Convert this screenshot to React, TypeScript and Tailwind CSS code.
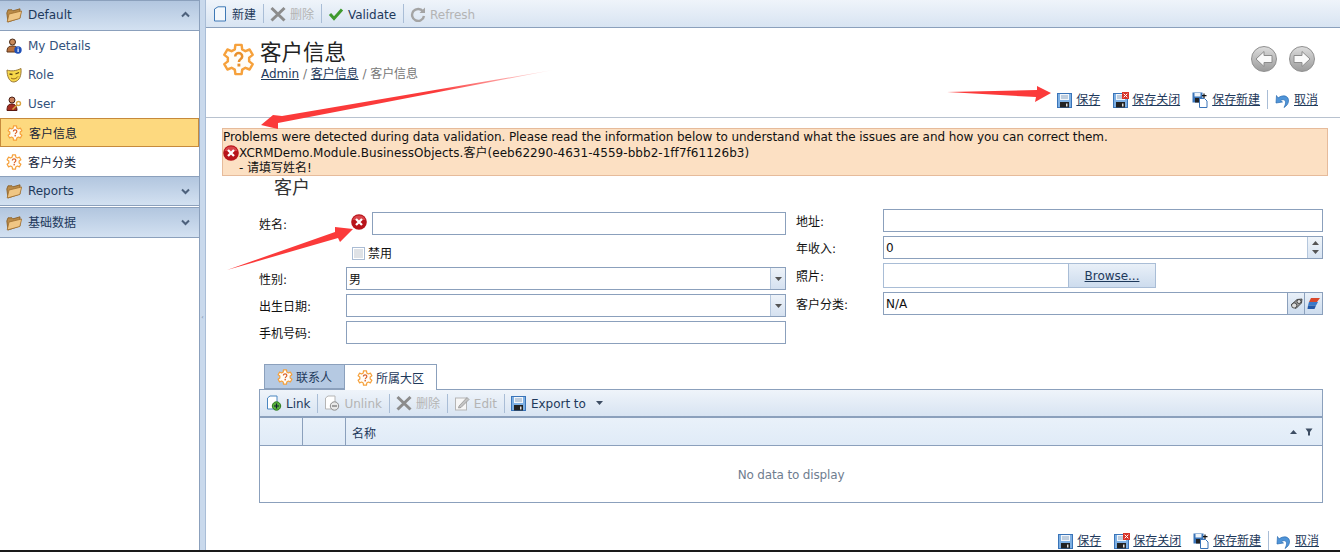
import React from "react";

const font = { fontFamily: '"DejaVu Sans", "Noto Sans CJK SC", sans-serif', letterSpacing: "-0.03px" };

// six toothed gear outline, 32 unit box
const gearPath = (() => {
  const at = (r: number, deg: number) => {
    const a = ((deg - 90) * Math.PI) / 180;
    return `${(16 + r * Math.cos(a)).toFixed(2)} ${(16 + r * Math.sin(a)).toFixed(2)}`;
  };
  const parts: string[] = [];
  for (let i = 0; i < 6; i++) {
    const c = i * 60;
    parts.push(at(10.5, c - 20), at(14.5, c - 12), at(14.5, c + 12), at(10.5, c + 20));
  }
  return `M${parts.join(" L")} Z`;
})();

const Gear = ({ size = 16, q = "#d9622b" }: { size?: number; q?: string }) => (
  <svg width={size} height={size} viewBox="0 0 32 32" className="shrink-0">
    <path d={gearPath} fill="#fffdf8" stroke="#f6a13c" strokeWidth="2.400" strokeLinejoin="round" />
    <path d="M12.800 13 c0 -4.400 6.800 -4.400 6.800 0 c0 2.700 -3.200 2.700 -3.200 5.500" fill="none" stroke={q} strokeWidth="2.400" />
    <rect x="15" y="20" width="2.800" height="2.800" fill={q} />
  </svg>
);

const Folder = () => (
  <svg width="16" height="16" viewBox="0 0 16 16" className="shrink-0">
    <path d="M0.800 6 L2 2.800 H6 L7 3.800 L14 1.800 V11 L2 15 Z" fill="#b98a48" stroke="#85591f" strokeWidth="0.800" />
    <path d="M1.200 15 L3 7 L15.700 4 L13.800 11.500 Z" fill="#f0c684" stroke="#a06f2e" strokeWidth="0.800" />
  </svg>
);

const Chevron = ({ up }: { up?: boolean }) => (
  <svg width="9" height="7" viewBox="0 0 9 7" className="shrink-0">
    <path d={up ? "M1 5.500 L4.500 2 L8 5.500" : "M1 1.500 L4.500 5 L8 1.500"} fill="none" stroke="#4d617c" strokeWidth="2" />
  </svg>
);

const UserInfoIcon = () => (
  <svg width="16" height="16" viewBox="0 0 16 16" className="shrink-0">
    <circle cx="6.500" cy="4" r="3" fill="#c98a5a" stroke="#4a2c18" />
    <path d="M1 14 C1 9 3 8 6.500 8 C10 8 12 9 12 14 Z" fill="#b8713e" stroke="#5a3418" />
    <circle cx="12" cy="12" r="3.700" fill="#1f50b8" />
    <rect x="11.500" y="11" width="1.200" height="3" fill="#fff" />
    <rect x="11.500" y="9.500" width="1.200" height="1" fill="#fff" />
  </svg>
);

const MaskIcon = () => (
  <svg width="16" height="16" viewBox="0 0 16 16" className="shrink-0">
    <path d="M1 3 C5 4.500 10 4 15 1.500 C15.500 8 14 14 8 15 C3 15 1 9 1 3 Z" fill="#f7d84a" stroke="#9c7a3a" />
    <path d="M3.500 7 L6.500 7.500 M9.500 7 L13 5.500" stroke="#5c4314" strokeWidth="1.300" />
    <path d="M5 11 C7 12.500 10 12 12 9.500" fill="none" stroke="#8a5a14" />
  </svg>
);

const UserKeyIcon = () => (
  <svg width="16" height="16" viewBox="0 0 16 16" className="shrink-0">
    <circle cx="6" cy="4" r="3" fill="#c9805a" stroke="#4a2018" />
    <path d="M1 14.500 C1 9 3 8 6 8 C9 8 11 10 11 14.500 Z" fill="#a52c20" stroke="#5a1810" />
    <circle cx="12.500" cy="7.500" r="2" fill="none" stroke="#d9a441" strokeWidth="1.400" />
    <path d="M11 9 L6.500 13.500" stroke="#d9a441" strokeWidth="1.500" />
  </svg>
);

const ErrorIcon = ({ size = 16 }: { size?: number }) => (
  <svg width={size} height={size} viewBox="0 0 16 16" className="shrink-0">
    <circle cx="8" cy="8" r="7.800" fill="#b8141a" />
    <path d="M1.500 6 A7 7 0 0 1 14.500 6 Z" fill="#d9444a" />
    <path d="M5 5 L11 11 M11 5 L5 11" stroke="#fff" strokeWidth="2.300" />
  </svg>
);

const Disk = ({ extra }: { extra?: "close" }) => (
  <svg width="16" height="16" viewBox="0 0 16 16" className="shrink-0">
    <rect x="0.500" y="1.500" width="14" height="14" fill="#7db0e4" stroke="#3a74b8" />
    <rect x="3" y="2" width="9" height="6" fill="#f2f6fb" />
    <path d="M4 4 H11 M4 6 H11" stroke="#8aa4c0" />
    <rect x="3" y="10" width="9" height="5.500" fill="#222" />
    <rect x="9" y="11.500" width="1.500" height="3" fill="#ddd" />
    {extra === "close" && (
      <>
        <rect x="9" y="0" width="7" height="7" fill="#d8352a" />
        <path d="M10.700 1.700 L14.300 5.300 M14.300 1.700 L10.700 5.300" stroke="#fff" />
      </>
    )}
  </svg>
);

const DiskNew = () => (
  <svg width="16" height="16" viewBox="0 0 16 16" className="shrink-0">
    <rect x="0.500" y="0.500" width="10" height="10" fill="#3a74b8" />
    <rect x="3" y="6" width="5" height="4.500" fill="#222" />
    <rect x="2.500" y="1" width="6" height="3.500" fill="#eef4fa" />
    <path d="M7.500 6.500 H12.500 L15 9 V15.500 H7.500 Z" fill="#fff" stroke="#3a74b8" />
    <path d="M12 1.500 V6 M10 3.700 H14.500" stroke="#111" strokeWidth="1.200" />
  </svg>
);

const Undo = () => (
  <svg width="16" height="16" viewBox="0 0 16 16" className="shrink-0">
    <path d="M3 6 C8 2 14 4 13.500 9 C13.300 12 11.500 14 9 15.500 C11 12 11 9 9.500 8 C8 7.300 6.500 7.800 5.500 8.800 L7.500 10 L1 11 L1.500 3.500 Z" fill="#4f94d8" stroke="#2b6cb0" strokeWidth="0.700" />
  </svg>
);

const NavCircle = ({ dir }: { dir: "left" | "right" }) => (
  <div className="flex h-[26px] w-[26px] items-center justify-center rounded-full border border-[#8f8f8f] bg-gradient-to-b from-[#dcdcdc] to-[#9c9c9c]">
    <svg width="20" height="18" viewBox="0 0 20 18">
      <path
        d={dir === "left" ? "M10 1.500 L2 9 L10 16.500 V12.500 H18 V5.500 H10 Z" : "M10 1.500 L18 9 L10 16.500 V12.500 H2 V5.500 H10 Z"}
        fill="#fafafa"
        stroke="#8c8c8c"
      />
    </svg>
  </div>
);

const Sep = () => <div className="ml-[7px] mr-[6px] h-[19px] w-px shrink-0 bg-[#a9bdd6]" />;

const NewDoc = () => (
  <svg width="16" height="16" viewBox="0 0 16 16" className="shrink-0">
    <path d="M2.500 3 L6 0.800 H13.500 V15 H2.500 Z" fill="#f4f8fc" stroke="#3f79b6" />
  </svg>
);

const XIcon = () => (
  <svg width="16" height="16" viewBox="0 0 16 16" className="shrink-0">
    <path d="M1.500 2 L14.500 14.500 M14.500 2 L1.500 14.500" stroke="#8c8c8c" strokeWidth="3" />
  </svg>
);

const CheckIcon = () => (
  <svg width="16" height="16" viewBox="0 0 16 16" className="shrink-0">
    <path d="M2 8 L6 12.500 L14 3.500" fill="none" stroke="#3f9a2e" strokeWidth="3" />
  </svg>
);

const RefreshIcon = () => (
  <svg width="16" height="16" viewBox="0 0 16 16" className="shrink-0">
    <path d="M13 5.500 A6 6 0 1 0 14 10" fill="none" stroke="#a4a4a4" strokeWidth="2.400" />
    <path d="M15 1.500 V7 H9.500 Z" fill="#a4a4a4" />
  </svg>
);

const LinkIcon = ({ minus }: { minus?: boolean }) => (
  <svg width="16" height="16" viewBox="0 0 16 16" className="shrink-0">
    <path d="M1.500 3 L4 1 H11 V14 H1.500 Z" fill="#fff" stroke={minus ? "#b5b5b5" : "#4a86c0"} />
    <circle cx="10.500" cy="11" r="4.200" fill={minus ? "#e8e8e8" : "#58b03c"} stroke={minus ? "#8c8c8c" : "#2c7a1e"} />
    {minus ? (
      <path d="M8 11 H13" stroke="#777" strokeWidth="1.300" />
    ) : (
      <path d="M8 11 H13 M10.500 8.500 V13.500" stroke="#123" strokeWidth="1.200" />
    )}
  </svg>
);

const EditIcon = () => (
  <svg width="16" height="16" viewBox="0 0 16 16" className="shrink-0">
    <rect x="1.500" y="3" width="11" height="12" fill="#f6f6f6" stroke="#b5b5b5" />
    <path d="M5 11 L13 2.500 L15 4.500 L7 12.500 L4.500 13 Z" fill="#c4c4c4" stroke="#8c8c8c" strokeWidth="0.700" />
  </svg>
);

const Caret = ({ up, color = "#3d4d63" }: { up?: boolean; color?: string }) => (
  <svg width="7" height="4" viewBox="0 0 7 4" className="shrink-0">
    <path d={up ? "M0 4 L3.500 0 L7 4 Z" : "M0 0 L7 0 L3.500 4 Z"} fill={color} />
  </svg>
);

const Group = ({ label, up, className = "h-[30px]" }: { label: string; up?: boolean; className?: string }) => (
  <div className={`flex items-center border-y border-[#8ba0bc] bg-gradient-to-b from-[#b2c6df] to-[#d3e1f1] pl-[6px] pr-[9px] ${className}`}>
    <Folder />
    <span className="ml-[6px] flex-1 text-[12px] text-[#1e395b]">{label}</span>
    <Chevron up={up} />
  </div>
);

const NavItem = ({ icon, label, active, cjk }: { icon: React.ReactNode; label: string; active?: boolean; cjk?: boolean }) => (
  <div
    className={`flex h-[29px] items-center pl-[6px] text-[12px] ${
      active ? "border border-[#c68a3c] bg-[#fdd97f] pl-[5px] text-[#16243a]" : cjk ? "text-[#16243a]" : "text-[#33527c]"
    }`}
  >
    {icon}
    <span className={`ml-[6px] ${cjk ? "pt-[2px]" : ""}`}>{label}</span>
  </div>
);

const Label = ({ children }: { children: React.ReactNode }) => (
  <div className="w-[87px] shrink-0 pt-[2px] text-[12px] text-[#111]">{children}</div>
);

const Field = ({ label, children, h = "h-[23px]", mb = "mb-[4px]" }: { label: string; children: React.ReactNode; h?: string; mb?: string }) => (
  <div className={`flex ${h} ${mb} items-center`}>
    <Label>{label}</Label>
    {children}
  </div>
);

const Box = ({ value, className = "" }: { value?: string; className?: string }) => (
  <div className={`flex h-full min-w-0 flex-1 items-center border border-[#8ba0bc] bg-white px-[2px] text-[12px] text-[#111] ${className}`}>{value}</div>
);

const Combo = ({ value }: { value?: string }) => (
  <div className="flex h-full flex-1 border border-[#8ba0bc] bg-white">
    <div className="flex flex-1 items-center px-[2px] pt-[2px] text-[12px] text-[#111]">{value}</div>
    <div className="flex w-[15px] items-center justify-center border-l border-[#b5c7dd] bg-gradient-to-b from-[#eef3f9] to-[#d5e1f0]">
      <Caret color="#555" />
    </div>
  </div>
);

const ToolText = ({ children, off }: { children: React.ReactNode; off?: boolean }) => (
  <span className={`ml-[4px] pt-[2px] text-[12px] ${off ? "text-[#b4b4b4]" : "text-[#1e395b]"}`}>{children}</span>
);

const SaveBar = () => (
  <div className="flex items-center text-[12px] text-[#1e395b]">
    <Disk />
    <a className="ml-[3px] mr-[13px] underline">保存</a>
    <Disk extra="close" />
    <a className="ml-[3px] mr-[12px] underline">保存关闭</a>
    <DiskNew />
    <a className="ml-[4px] underline">保存新建</a>
    <Sep />
    <div className="w-px" />
    <Undo />
    <a className="ml-[3px] underline">取消</a>
  </div>
);

export default function App() {
  return (
    <div className="relative flex h-[552px] w-[1340px] overflow-hidden bg-white" style={font}>
      {/* left nav */}
      <div className="w-[200px] shrink-0 border-r border-[#8ba0bc] bg-white">
        <Group label="Default" up className="h-[31px] pb-[2px]" />
        <NavItem icon={<UserInfoIcon />} label="My Details" />
        <NavItem icon={<MaskIcon />} label="Role" />
        <NavItem icon={<UserKeyIcon />} label="User" />
        <NavItem icon={<Gear />} label="客户信息" active cjk />
        <NavItem icon={<Gear />} label="客户分类" cjk />
        <Group label="Reports" />
        <Group label="基础数据" className="mt-[1px] h-[31px]" />
      </div>
      <div className="flex w-[6px] shrink-0 items-center justify-center border-r border-[#a9bdd6] bg-[#c9d9ec]">
        <span className="mt-[80px] text-[6px] text-[#5a7090]">‹</span>
      </div>

      <div className="flex min-w-0 flex-1 flex-col">
        {/* top toolbar */}
        <div className="flex h-[28px] shrink-0 items-center border-b border-[#8ba0bc] bg-gradient-to-b from-[#eff4fa] to-[#d8e4f2] pl-[6px]">
          <NewDoc />
          <ToolText>新建</ToolText>
          <Sep />
          <XIcon />
          <ToolText off>删除</ToolText>
          <Sep />
          <CheckIcon />
          <ToolText>Validate</ToolText>
          <Sep />
          <RefreshIcon />
          <ToolText off>Refresh</ToolText>
        </div>

        {/* title */}
        <div className="flex h-[90px] shrink-0 border-b border-[#b8c2cf] pl-[16px] pr-[22px]">
          <div className="mt-[15px]">
            <Gear size={33} q="#e8902c" />
          </div>
          <div className="ml-[5px] mt-[11px]">
            <div className="text-[21.500px] leading-[28px] text-[#222]">客户信息</div>
            <div className="-mt-[1px] pl-[1px] text-[12px] leading-[16px] text-[#777]">
              <a className="text-[#1e395b] underline">Admin</a> / <a className="text-[#1e395b] underline">客户信息</a> / 客户信息
            </div>
          </div>
          <div className="ml-auto flex flex-col items-end">
            <div className="mr-[3px] mt-[18px] flex gap-[12px]">
              <NavCircle dir="left" />
              <NavCircle dir="right" />
            </div>
            <div className="mt-[18px]">
              <SaveBar />
            </div>
          </div>
        </div>

        {/* validation */}
        <div className="ml-[16px] mr-[12px] mt-[10px] h-[48px] shrink-0 border border-[#e6bb9b] bg-[#fce0c3] text-[12px] leading-[15px] text-[#111]">
          <div className="pt-[1px] tracking-[-0.075px]">Problems were detected during data validation. Please read the information below to understand what the issues are and how you can correct them.</div>
          <div className="flex items-center tracking-[0.040px]">
            <ErrorIcon />
            <span>XCRMDemo.Module.BusinessObjects.客户(eeb62290-4631-4559-bbb2-1ff7f61126b3)</span>
          </div>
          <div className="pl-[16px]">- 请填写姓名!</div>
        </div>

        <div className="ml-[68px] mt-[1px] h-[23px] shrink-0 text-[18px] leading-[22px] text-[#333]">客户</div>

        {/* form */}
        <div className="ml-[53px] mr-[17px] flex shrink-0 gap-[10px]">
          <div className="w-[527px] pt-[12px]">
            <div className="mb-[10px] flex h-[23px] items-center">
              <Label>姓名:</Label>
              <div className="-mt-[3px] flex w-[26px] shrink-0 justify-start pl-[5px]">
                <ErrorIcon />
              </div>
              <Box />
            </div>
            <div className="mb-[6px] ml-[93px] flex h-[16px] items-center text-[12px] text-[#111]">
              <div className="flex h-[13px] w-[13px] items-center justify-center border border-[#aabcd4] bg-white">
                <div className="h-[9px] w-[9px] bg-[#dfe2e6]" />
              </div>
              <span className="ml-[3px] pt-[2px]">禁用</span>
            </div>
            <Field label="性别:">
              <Combo value="男" />
            </Field>
            <Field label="出生日期:">
              <Combo />
            </Field>
            <Field label="手机号码:" mb="mb-0">
              <Box />
            </Field>
          </div>
          <div className="w-[527px] pt-[9px]">
            <Field label="地址:">
              <Box />
            </Field>
            <Field label="年收入:">
              <div className="flex h-full flex-1 border border-[#8ba0bc] bg-white">
                <div className="flex flex-1 items-center px-[2px] text-[12px] text-[#111]">0</div>
                <div className="flex w-[15px] flex-col items-center justify-center gap-[5px] border-l border-[#b5c7dd] bg-gradient-to-b from-[#f0f5fa] to-[#d8e4f2]">
                  <Caret up color="#555" />
                  <Caret color="#555" />
                </div>
              </div>
            </Field>
            <Field label="照片:" h="h-[25px]">
              <div className="flex h-full border border-[#a9bdd6] bg-white">
                <div className="w-[184px]" />
                <div className="flex w-[87px] items-center justify-center border-l border-[#a9bdd6] bg-gradient-to-b from-[#e9f0f8] to-[#cddcee] text-[12px] text-[#1e395b] underline">
                  Browse...
                </div>
              </div>
            </Field>
            <Field label="客户分类:" mb="mb-0">
              <div className="flex h-full flex-1 border border-[#8ba0bc] bg-white">
                <div className="flex flex-1 items-center px-[2px] text-[12px] text-[#111]">N/A</div>
                <div className="flex w-[17px] items-center justify-center border-l border-[#8ba0bc] bg-gradient-to-b from-[#e9f0f8] to-[#cddcee]">
                  <svg width="13" height="11" viewBox="0 0 13 11">
                    <path d="M1 7 L7 1.500 L12 1 L11.500 5 L6 10.500 Z" fill="#999" stroke="#333" strokeWidth="0.800" />
                    <circle cx="4.200" cy="7.500" r="2.600" fill="#ddd" stroke="#333" strokeWidth="0.800" />
                    <circle cx="9" cy="3.500" r="2" fill="#ddd" stroke="#333" strokeWidth="0.800" />
                  </svg>
                </div>
                <div className="flex w-[18px] items-center justify-center border-l border-[#8ba0bc] bg-gradient-to-b from-[#e9f0f8] to-[#cddcee]">
                  <svg width="14" height="13" viewBox="0 0 14 13">
                    <path d="M4 1 H13 L10 5 H2 Z" fill="#d9482b" />
                    <path d="M2 5 H11 L9 8.500 H1 Z" fill="#3a78c8" />
                    <path d="M1 8.500 H9 L7.500 12 H0.500 Z" fill="#2458a8" />
                  </svg>
                </div>
              </div>
            </Field>
          </div>
        </div>

        {/* tabs + grid */}
        <div className="ml-[53px] mr-[17px] mt-[20px] shrink-0">
          <div className="flex h-[25px] pl-[5px]">
            <div className="flex w-[81px] items-center gap-[3px] border border-[#8ba0bc] bg-[#b5c9e2] pl-[12px] text-[12px] text-[#1e395b]">
              <Gear />
              <span className="pt-[2px]">联系人</span>
            </div>
            <div className="z-10 -ml-px flex h-[26px] w-[93px] items-center gap-[3px] border border-b-0 border-[#8ba0bc] bg-white pl-[12px] text-[12px] text-[#1e395b]">
              <Gear />
              <span className="pt-[2px]">所属大区</span>
            </div>
          </div>
          <div className="h-[114px] border border-[#8ba0bc] bg-white">
            <div className="flex h-[28px] items-center border-b-2 border-[#8ba0bc] bg-gradient-to-b from-[#eff4fa] to-[#d8e4f2] pl-[6px]">
              <LinkIcon />
              <ToolText>Link</ToolText>
              <Sep />
              <LinkIcon minus />
              <ToolText off>Unlink</ToolText>
              <Sep />
              <XIcon />
              <ToolText off>删除</ToolText>
              <Sep />
              <EditIcon />
              <ToolText off>Edit</ToolText>
              <Sep />
              <Disk />
              <ToolText>Export to</ToolText>
              <div className="ml-[10px]">
                <Caret />
              </div>
            </div>
            <div className="flex h-[28px] border-b border-[#8ba0bc] bg-gradient-to-b from-[#e9f1fa] to-[#e0ebf7] text-[12px] text-[#1e395b]">
              <div className="w-[43px] border-r border-[#8ba0bc]" />
              <div className="w-[43px] border-r border-[#8ba0bc]" />
              <div className="flex flex-1 items-center pl-[6px] pr-[9px]">
                <span className="pt-[4px]">名称</span>
                <div className="ml-auto flex items-center gap-[8px]">
                  <Caret up />
                  <svg width="8" height="8" viewBox="0 0 8 8">
                    <path d="M0.500 0.500 H7.500 L5 4 V7.500 H3 V4 Z" fill="#3d4d63" />
                  </svg>
                </div>
              </div>
            </div>
            <div className="flex h-[55px] items-center justify-center pt-[2px] text-[12px] tracking-[-0.150px] text-[#6f7d8f]">No data to display</div>
          </div>
        </div>

        <div className="mr-[21px] mt-[28px] flex shrink-0 justify-end">
          <SaveBar />
        </div>
      </div>

      {/* bottom edge of the capture */}
      <div className="absolute bottom-0 left-0 h-[2px] w-full bg-[#1a1a1a]" />

      {/* red annotation arrows */}
      <svg className="pointer-events-none absolute left-0 top-0" width="1340" height="552">
        <defs>
          <linearGradient id="fadeA" gradientUnits="userSpaceOnUse" x1="262" y1="125" x2="553" y2="70">
            <stop offset="0.6" stopColor="#fb3a3a" />
            <stop offset="1" stopColor="#fb3a3a" stopOpacity="0.1" />
          </linearGradient>
        </defs>
        <polygon points="553,70 282,116 273,115 261,125 278,129 278,123" fill="url(#fadeA)" />
        <polygon points="947,92 1037,90 1037,86 1051,93 1035,102 1036,97" fill="#fb3a3a" />
        <polygon points="227,270 335,232 335,227 353,229 340,242 338,238" fill="#fb3a3a" />
      </svg>
    </div>
  );
}
